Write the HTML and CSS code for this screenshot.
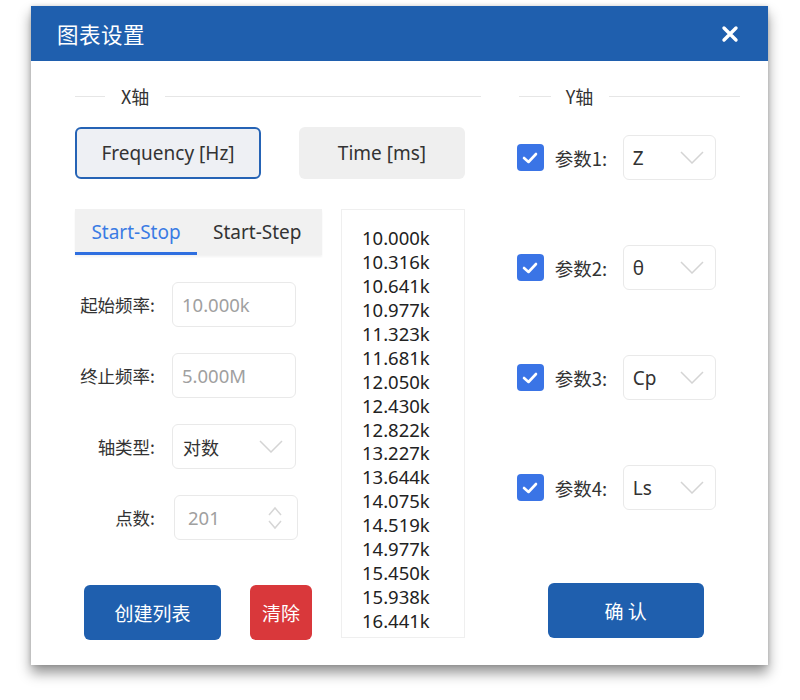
FILE: index.html
```html
<!DOCTYPE html>
<html lang="zh-CN">
<head>
<meta charset="utf-8">
<title>图表设置</title>
<link rel="stylesheet" href="styles.css">
</head>
<body>
<div class="dialog">
  <div class="header">
    <span class="title">图表设置</span>
    <svg class="close" width="18" height="18" viewBox="0 0 18 18"><path d="M3 3 L15 15 M15 3 L3 15" stroke="#fff" stroke-width="3.4" stroke-linecap="round"/></svg>
  </div>
  <div class="body">
    <div class="xcol">
      <div class="divider"><span class="line short"></span><span class="dtext">X轴</span><span class="line"></span></div>
      <div class="modes">
        <button class="mode active">Frequency [Hz]</button>
        <button class="mode">Time [ms]</button>
      </div>
      <div class="xmain">
        <div class="xleft">
          <div class="tabs">
            <div class="tab sel">Start-Stop</div>
            <div class="tab">Start-Step</div>
          </div>
          <div class="form">
            <div class="frow"><span class="lbl">起始频率:</span><div class="field ph">10.000k</div></div>
            <div class="frow"><span class="lbl">终止频率:</span><div class="field ph">5.000M</div></div>
            <div class="frow"><span class="lbl">轴类型:</span><div class="field sel-field">对数<svg class="chev" width="24" height="13" viewBox="0 0 24 13"><path d="M1 1 L12 12 L23 1" fill="none" stroke="#d4d4d4" stroke-width="1.5"/></svg></div></div>
            <div class="frow nudge"><span class="lbl">点数:</span><div class="field ph">201<svg class="spin" width="16" height="26" viewBox="0 0 16 26"><path d="M2 10 L8 3 L14 10 M2 16 L8 23 L14 16" fill="none" stroke="#d6d6d6" stroke-width="1.5"/></svg></div></div>
          </div>
          <div class="actions">
            <button class="btn blue create">创建列表</button>
            <button class="btn red">清除</button>
          </div>
        </div>
        <div class="list">
          <div>10.000k</div><div>10.316k</div><div>10.641k</div><div>10.977k</div>
          <div>11.323k</div><div>11.681k</div><div>12.050k</div><div>12.430k</div>
          <div>12.822k</div><div>13.227k</div><div>13.644k</div><div>14.075k</div>
          <div>14.519k</div><div>14.977k</div><div>15.450k</div><div>15.938k</div>
          <div>16.441k</div><div>16.960k</div>
        </div>
      </div>
    </div>
    <div class="ycol">
      <div class="divider ydiv"><span class="line short"></span><span class="dtext">Y轴</span><span class="line"></span></div>
      <div class="params">
        <div class="prow"><span class="check"><svg width="16" height="12" viewBox="0 0 16 12"><path d="M2 6 L6.5 10 L14 2" fill="none" stroke="#fff" stroke-width="2.6" stroke-linecap="round" stroke-linejoin="round"/></svg></span><span class="plbl">参数1:</span><div class="field psel">Z<svg class="chev" width="24" height="13" viewBox="0 0 24 13"><path d="M1 1 L12 12 L23 1" fill="none" stroke="#d4d4d4" stroke-width="1.5"/></svg></div></div>
        <div class="prow"><span class="check"><svg width="16" height="12" viewBox="0 0 16 12"><path d="M2 6 L6.5 10 L14 2" fill="none" stroke="#fff" stroke-width="2.6" stroke-linecap="round" stroke-linejoin="round"/></svg></span><span class="plbl">参数2:</span><div class="field psel">θ<svg class="chev" width="24" height="13" viewBox="0 0 24 13"><path d="M1 1 L12 12 L23 1" fill="none" stroke="#d4d4d4" stroke-width="1.5"/></svg></div></div>
        <div class="prow"><span class="check"><svg width="16" height="12" viewBox="0 0 16 12"><path d="M2 6 L6.5 10 L14 2" fill="none" stroke="#fff" stroke-width="2.6" stroke-linecap="round" stroke-linejoin="round"/></svg></span><span class="plbl">参数3:</span><div class="field psel">Cp<svg class="chev" width="24" height="13" viewBox="0 0 24 13"><path d="M1 1 L12 12 L23 1" fill="none" stroke="#d4d4d4" stroke-width="1.5"/></svg></div></div>
        <div class="prow"><span class="check"><svg width="16" height="12" viewBox="0 0 16 12"><path d="M2 6 L6.5 10 L14 2" fill="none" stroke="#fff" stroke-width="2.6" stroke-linecap="round" stroke-linejoin="round"/></svg></span><span class="plbl">参数4:</span><div class="field psel">Ls<svg class="chev" width="24" height="13" viewBox="0 0 24 13"><path d="M1 1 L12 12 L23 1" fill="none" stroke="#d4d4d4" stroke-width="1.5"/></svg></div></div>
      </div>
      <div class="yactions">
        <button class="btn blue confirm">确 认</button>
      </div>
    </div>
  </div>
</div>
</body>
</html>
```

FILE: styles.css
```css
* { box-sizing: border-box; }
html, body { margin: 0; padding: 0; background: #ffffff; }
body {
  min-height: 700px;
  padding-top: 6px;
  font-family: "Noto Sans", "Noto Sans CJK SC", sans-serif;
  color: #2a2a2a;
}
.dialog {
  width: 737px;
  height: 659px;
  margin-left: 31px;
  background: #fff;
  box-shadow: 0 8px 12px rgba(0,0,0,0.42), 0 0 4px rgba(0,0,0,0.15);
  display: flex;
  flex-direction: column;
}
.header {
  height: 55px;
  background: #1f5fae;
  display: flex;
  align-items: center;
  justify-content: space-between;
  padding: 0 29px 0 26px;
}
.title {
  color: #fff;
  font-family: "Noto Sans CJK SC", sans-serif;
  font-size: 21.5px;
  letter-spacing: 0.5px;
}
.close { display: block; }
.body {
  display: flex;
  padding: 23px 28px 0 44px;
  gap: 36px;
}
.xcol { width: 407px; }
.ycol { width: 224px; display: flex; flex-direction: column; }
.divider {
  height: 24px;
  display: flex;
  align-items: center;
}
.divider .line { flex: 1; height: 1px; background: #e6e6e6; }
.divider .line.short { flex: 0 0 30px; }
.dtext {
  font-family: "Noto Sans CJK SC", sans-serif;
  font-size: 18px;
  color: #333;
  padding: 0 16px;
}
.ydiv { margin-left: 2px; }
.ydiv .line.short { flex: 0 0 32px; }
.ydiv .dtext { padding: 0 16px 0 15px; }
.modes {
  display: flex;
  gap: 38px;
  margin-top: 19px;
}
.mode {
  height: 52px;
  border: none;
  border-radius: 6px;
  background: #efefef;
  font-family: "Noto Sans", sans-serif;
  font-size: 19px;
  color: #333;
  padding: 0;
  width: 166px;
}
.mode.active {
  width: 186px;
  background: #eef0f4;
  border: 2px solid #2563b5;
}
.xmain {
  display: flex;
  gap: 19px;
  margin-top: 30px;
}
.xleft { width: 247px; display: flex; flex-direction: column; }
.tabs {
  height: 46px;
  background: #f1f1f1;
  display: flex;
  box-shadow: 0 2px 2px rgba(0,0,0,0.05);
}
.tab {
  font-size: 19px;
  color: #333;
  display: flex;
  align-items: center;
  justify-content: center;
  padding: 0 15px;
}
.tab.sel {
  color: #3a7be4;
  width: 122px;
  border-bottom: 3px solid #2f6fe0;
  padding-top: 3px;
}
.tab + .tab { padding-left: 16px; }
.form {
  display: flex;
  flex-direction: column;
  gap: 26px;
  margin-top: 27px;
}
.frow {
  display: flex;
  align-items: center;
  gap: 17px;
}
.lbl {
  width: 80px;
  text-align: right;
  font-family: "Noto Sans CJK SC", sans-serif;
  font-size: 17.5px;
  color: #333;
  white-space: nowrap;
}
.field {
  width: 124px;
  height: 45px;
  border: 1px solid #e9e9e9;
  border-radius: 6px;
  display: flex;
  align-items: center;
  justify-content: space-between;
  padding: 0 8px 0 9px;
  font-size: 18.5px;
  color: #333;
  background: #fff;
}
.field.ph { color: #a0a0a0; }
.sel-field { font-family: "Noto Sans CJK SC", sans-serif; font-size: 18px; padding-left: 10px; padding-right: 12px; }
.nudge .field { margin-left: 2px; padding-left: 13px; padding-right: 14px; }
.chev { display: block; }
.spin { display: block; }
.actions {
  display: flex;
  margin-top: 45px;
  margin-left: 9px;
  gap: 29px;
}
.btn {
  height: 55px;
  border: none;
  border-radius: 6px;
  color: #fff;
  font-family: "Noto Sans CJK SC", sans-serif;
  font-size: 19px;
  padding: 0;
}
.btn.blue { background: #1f5fae; }
.btn.red { background: #d9383b; width: 62px; }
.create { width: 137px; }
.list {
  width: 124px;
  height: 429px;
  border: 1px solid #efefef;
  overflow: hidden;
  padding: 16px 0 0 20px;
  font-size: 18.5px;
  line-height: 23.94px;
  color: #222;
}
.params {
  display: flex;
  flex-direction: column;
  gap: 65px;
  margin-top: 27px;
}
.prow {
  display: flex;
  align-items: center;
}
.check {
  width: 27px;
  height: 27px;
  background: #3a74e6;
  border-radius: 4px;
  display: flex;
  align-items: center;
  justify-content: center;
}
.plbl {
  margin-left: 11px;
  width: 57px;
  font-family: "Noto Sans CJK SC", sans-serif;
  font-size: 18.5px;
  color: #333;
  white-space: nowrap;
}
.psel {
  width: 93px;
  margin-left: 11px;
  padding-left: 9px;
  padding-right: 11px;
  font-size: 19px;
}
.yactions {
  margin-top: 73px;
  padding-left: 31px;
}
.confirm { width: 156px; }
```
